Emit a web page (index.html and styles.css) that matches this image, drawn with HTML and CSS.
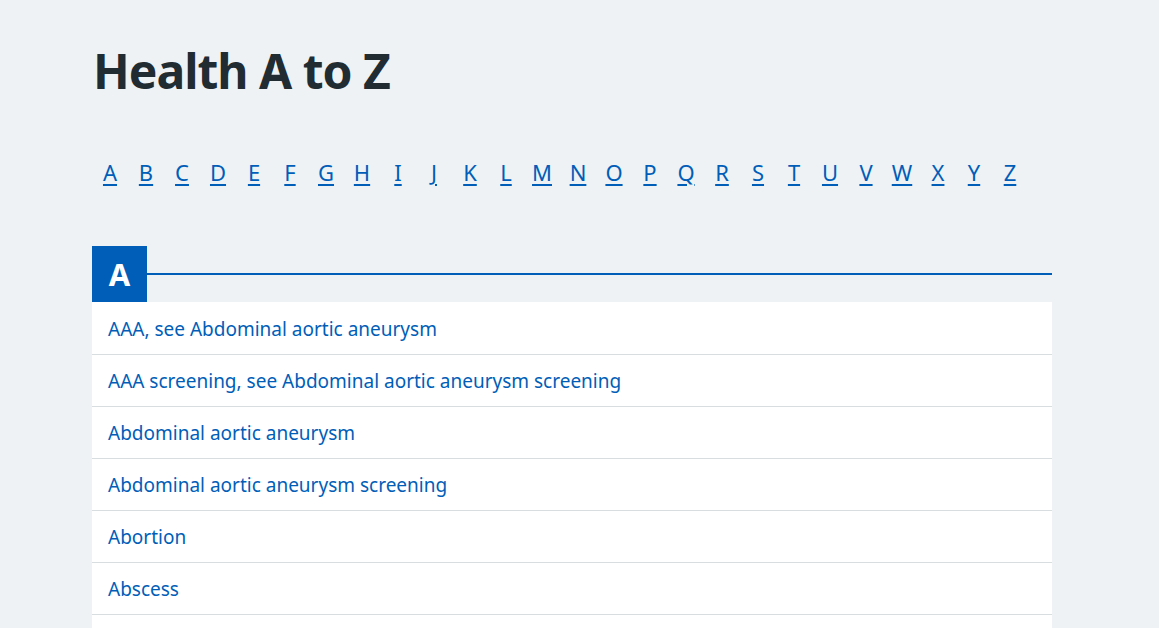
FILE: index.html
```html
<!DOCTYPE html>
<html lang="en">
<head>
<meta charset="utf-8">
<title>Health A to Z</title>
<link rel="stylesheet" href="styles.css">
</head>
<body>
<main class="page">
  <h1 class="title">Health A to Z</h1>
  <nav class="az-nav" aria-label="A to Z">
    <ol class="az-list">
      <li><a href="#a">A</a></li><li><a href="#b">B</a></li><li><a href="#c">C</a></li><li><a href="#d">D</a></li><li><a href="#e">E</a></li><li><a href="#f">F</a></li><li><a href="#g">G</a></li><li><a href="#h">H</a></li><li><a href="#i">I</a></li><li><a href="#j">J</a></li><li><a href="#k">K</a></li><li><a href="#l">L</a></li><li><a href="#m">M</a></li><li><a href="#n">N</a></li><li><a href="#o">O</a></li><li><a href="#p">P</a></li><li><a href="#q">Q</a></li><li><a href="#r">R</a></li><li><a href="#s">S</a></li><li><a href="#t">T</a></li><li><a href="#u">U</a></li><li><a href="#v">V</a></li><li><a href="#w">W</a></li><li><a href="#x">X</a></li><li><a href="#y">Y</a></li><li><a href="#z">Z</a></li>
    </ol>
  </nav>
  <section class="letter-section" id="a">
    <div class="letter-head">
      <h2 class="letter-box">A</h2>
      <div class="letter-rule"></div>
    </div>
    <ul class="entries">
      <li><a href="#">AAA, see Abdominal aortic aneurysm</a></li>
      <li><a href="#">AAA screening, see Abdominal aortic aneurysm screening</a></li>
      <li><a href="#">Abdominal aortic aneurysm</a></li>
      <li><a href="#">Abdominal aortic aneurysm screening</a></li>
      <li><a href="#">Abortion</a></li>
      <li><a href="#">Abscess</a></li>
    </ul>
  </section>
</main>
</body>
</html>
```
FILE: styles.css
```css
html, body {
  margin: 0;
  padding: 0;
  background: #eef2f5;
}
body {
  font-family: "Noto Sans", "Open Sans", sans-serif;
  color: #212b32;
}
.page {
  width: 960px;
  margin: 0 0 0 92px;
  padding-top: 39px;
}
.title {
  margin: 0;
  font-size: 48px;
  line-height: 64px;
  font-weight: 700;
  letter-spacing: -1px;
  padding-left: 1px;
}
.az-nav {
  margin-top: 53px;
}
.az-list {
  list-style: none;
  margin: 0;
  padding: 0;
  display: grid;
  grid-template-columns: repeat(26, 36px);
}
.az-list li {
  text-align: center;
  font-size: 22px;
  line-height: 32px;
}
.az-list a {
  color: #005eb8;
  text-decoration: underline;
  text-underline-offset: 3px;
  text-decoration-thickness: 2px;
}
.letter-section {
  margin-top: 58px;
}
.letter-head {
  display: flex;
  align-items: center;
}
.letter-box {
  margin: 0;
  width: 55px;
  height: 56px;
  background: #005eb8;
  color: #fff;
  font-size: 31px;
  font-weight: 700;
  line-height: 56px;
  text-align: center;
  flex: none;
}
.letter-rule {
  flex: 1;
  height: 2px;
  background: #005eb8;
}
.entries {
  list-style: none;
  margin: 0;
  padding: 1px 0 40px;
  background: #fff;
}
.entries li {
  height: 52px;
  box-sizing: border-box;
  border-bottom: 1px solid #d8dde0;
  display: flex;
  align-items: center;
  padding-left: 16px;
  font-size: 19px;
}
.entries a {
  color: #005eb8;
  text-decoration: none;
}
```
